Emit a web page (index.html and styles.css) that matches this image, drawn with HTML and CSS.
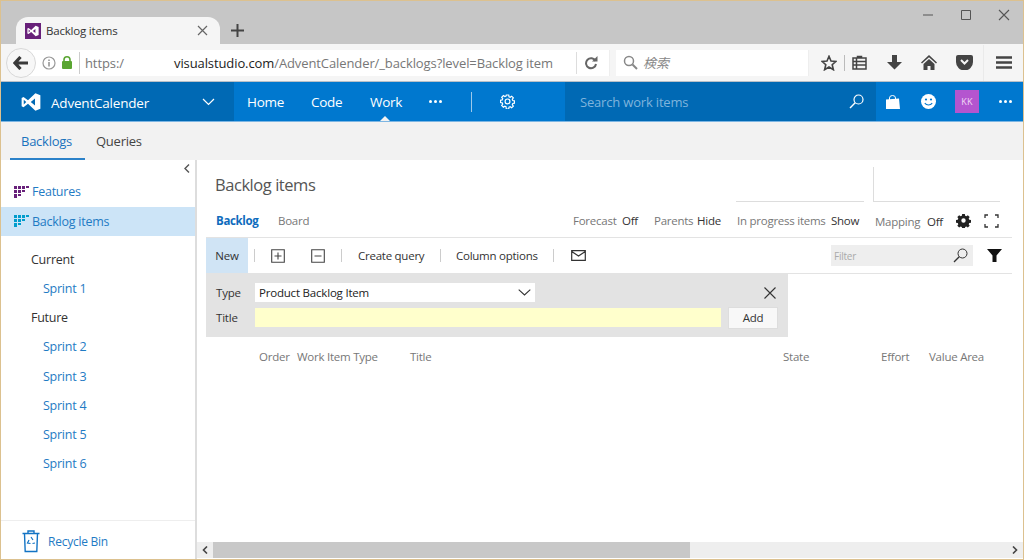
FILE: index.html
```html
<!DOCTYPE html>
<html lang="en">
<head>
<meta charset="utf-8">
<title>Backlog items</title>
<link rel="stylesheet" href="styles.css">
</head>
<body>
<div class="window">
  <div class="tabstrip">
    <div class="tab">
      <span class="favicon"><svg width="12" height="12" viewBox="0 0 16 16"><path fill="#fff" d="M11.5 1 5.6 6.6 2 3.9.5 4.7v6.6l1.5.8 3.6-2.7 5.9 5.6 4-1.6V2.6zM2.2 9.900V6.100L4.200 8zm9 .9L7.800 8l3.400-2.800z"/></svg></span>
      <span class="tab-title">Backlog items</span>
      <svg class="tab-close" width="11" height="11" viewBox="0 0 11 11"><path d="M1 1l9 9M10 1l-9 9" stroke="#666" stroke-width="1.2"/></svg>
    </div>
    <svg class="newtab" width="13" height="13" viewBox="0 0 13 13"><path d="M6.500 0v13M0 6.500h13" stroke="#444" stroke-width="2"/></svg>
    <div class="winctl">
      <svg width="12" height="12" viewBox="0 0 12 12"><path d="M1 6h10" stroke="#555" stroke-width="1"/></svg>
      <svg width="12" height="12" viewBox="0 0 12 12"><path d="M1.500 1.500h9v9h-9z" fill="none" stroke="#555"/></svg>
      <svg width="12" height="12" viewBox="0 0 12 12"><path d="M1 1l10 10M11 1L1 11" stroke="#555" stroke-width="1.1"/></svg>
    </div>
  </div>

  <div class="toolbar">
    <div class="backbtn"><svg width="16" height="14" viewBox="0 0 16 14"><path d="M7.500 1 2 7l5.500 6M2.500 7H15" fill="none" stroke="#3a3a3a" stroke-width="3.200"/></svg></div>
    <div class="urlbar">
      <svg class="ic-info" width="14" height="14" viewBox="0 0 14 14"><circle cx="7" cy="7" r="6" fill="none" stroke="#999" stroke-width="1.200"/><path d="M7 6v4.500M7 3.500v1.400" stroke="#888" stroke-width="1.400"/></svg>
      <svg class="ic-lock" width="12" height="13" viewBox="0 0 12 13"><rect x="1" y="5" width="10" height="8" rx="1" fill="#5aa632"/><path d="M3 6V3.800a3 3 0 0 1 6 0V6" fill="none" stroke="#5aa632" stroke-width="1.600"/></svg>
      <span class="url-div"></span>
      <span class="url-scheme">https:/</span>
      <span class="url-host">visualstudio.com</span><span class="url-path">/AdventCalender/_backlogs?level=Backlog item</span>
      <span class="url-div2"></span>
      <svg class="ic-reload" width="14" height="14" viewBox="0 0 14 14"><path d="M11.500 5A5 5 0 1 0 12 8" fill="none" stroke="#666" stroke-width="2"/><path d="M8 5.500h5.500V0z" fill="#666"/></svg>
    </div>
    <div class="searchbar">
      <svg width="15" height="15" viewBox="0 0 15 15"><circle cx="6" cy="6" r="4.500" fill="none" stroke="#888" stroke-width="1.500"/><path d="M9.500 9.500 14 14" stroke="#888" stroke-width="2"/></svg>
      <span class="search-ph">検索</span>
    </div>
    <div class="tools">
      <svg class="t-star" width="16" height="16" viewBox="0 0 16 16"><path d="M8 1.300 10 6l5 .4-3.800 3.300 1.200 5L8 12l-4.400 2.700 1.200-5L1 6.400 6 6z" fill="none" stroke="#444" stroke-width="1.600"/></svg>
      <span class="t-div"></span>
      <svg class="t-list" width="15" height="15" viewBox="0 0 15 15"><path d="M1 3h13v11H1zM5.500 1.500h4V3h-4zM4.500 3v11M1 6.500h13M1 10h13" fill="none" stroke="#444" stroke-width="1.500"/></svg>
      <svg class="t-down" width="15" height="15" viewBox="0 0 15 15"><path d="M5 0h5v7h5l-7.500 7.500L0 7h5z" fill="#444"/></svg>
      <svg class="t-home" width="16" height="15" viewBox="0 0 16 15"><path d="M8 0 0 7.500l1 1L8 2.300l7 6.200 1-1zM8 4 2.500 9v6h4v-4h3v4h4V9z" fill="#444"/></svg>
      <svg class="t-pocket" width="17" height="15" viewBox="0 0 17 15"><path d="M2 0h13a2 2 0 0 1 2 2v5a8.500 8.500 0 0 1-17 0V2a2 2 0 0 1 2-2z" fill="#444"/><path d="M5 5l3.500 3.500L12 5" fill="none" stroke="#f5f5f5" stroke-width="2"/></svg>
      <span class="t-sep"></span>
      <svg class="t-menu" width="16" height="13" viewBox="0 0 16 13"><path d="M0 1.500h16M0 6.500h16M0 11.500h16" stroke="#444" stroke-width="2.400"/></svg>
    </div>
  </div>

  <nav class="nav">
    <div class="brand">
      <svg width="20" height="20" viewBox="0 0 16 16"><path fill="#fff" d="M11.500 1 5.600 6.600 2 3.900.5 4.700v6.600l1.500.8 3.600-2.700 5.900 5.600 4-1.600V2.600zM2.200 9.900V6.100L4.200 8zm9 .9L7.800 8l3.400-2.800z"/></svg>
      <span class="brand-name">AdventCalender</span>
      <svg class="brand-chev" width="13" height="8" viewBox="0 0 13 8"><path d="M1 1l5.500 5.500L12 1" fill="none" stroke="#fff" stroke-width="1.200"/></svg>
    </div>
    <div class="hubs">
      <span class="hub hub-home">Home</span>
      <span class="hub hub-code">Code</span>
      <span class="hub hub-work">Work</span>
      <span class="dots hub-dots"><i></i><i></i><i></i></span>
      <span class="hub-div"></span>
      <svg class="hub-gear" width="15" height="15" viewBox="0 0 15 15"><path d="M6.300 1h2.400l.3 1.700 1.200.5 1.400-1 1.700 1.700-1 1.400.5 1.200 1.700.3v2.400l-1.700.3-.5 1.200 1 1.400-1.700 1.700-1.400-1-1.200.5-.3 1.700H6.300L6 12.700l-1.200-.5-1.400 1-1.700-1.700 1-1.400-.5-1.200L.5 8.600V6.200l1.700-.3.5-1.200-1-1.400 1.700-1.700 1.400 1L6 2.100z" fill="none" stroke="#fff" stroke-width="1.200"/><circle cx="7.500" cy="7.400" r="2.400" fill="none" stroke="#fff" stroke-width="1.200"/></svg>
    </div>
    <div class="navsearch">
      <span class="navsearch-ph">Search work items</span>
      <svg width="15" height="15" viewBox="0 0 15 15"><circle cx="9.500" cy="5.500" r="4.500" fill="none" stroke="#fff" stroke-width="1.200"/><path d="M6.200 8.800 1 14" stroke="#fff" stroke-width="1.400"/></svg>
    </div>
    <div class="navright">
      <svg class="nr-bag" width="14" height="14" viewBox="0 0 14 14"><path d="M0 4.500 13 3.500 14 14H0z" fill="#fff"/><path d="M3.500 5V3a3 2.500 0 0 1 6 0v2" fill="none" stroke="#fff" stroke-width="1"/></svg>
      <svg class="nr-smile" width="15" height="15" viewBox="0 0 15 15"><circle cx="7.500" cy="7.500" r="7.500" fill="#fff"/><circle cx="5" cy="5.500" r="1.100" fill="#0078cf"/><circle cx="10" cy="5.500" r="1.100" fill="#0078cf"/><path d="M3.800 9.200c1.800 2.400 5.600 2.400 7.400 0" fill="none" stroke="#0078cf" stroke-width="1.100"/></svg>
      <span class="avatar">KK</span>
      <span class="dots nr-dots"><i></i><i></i><i></i></span>
    </div>
  </nav>

  <div class="subnav">
    <span class="subtab subtab-active">Backlogs</span>
    <span class="subtab">Queries</span>
  </div>

  <div class="main">
    <aside class="sidebar">
      <div class="collapse"><svg width="6" height="9" viewBox="0 0 6 9"><path d="M5 .5 1 4.500l4 4" fill="none" stroke="#555" stroke-width="1.400"/></svg></div>
      <div class="side-item">
        <svg width="15" height="12" viewBox="0 0 15 12"><path fill="#68217a" d="M0 0h3v3H0zM4 0h3v3H4zM8 0h3v3H8zM12 0h3v2h-3zM0 4h3v3H0zM4 4h3v3H4zM8 4h3v2H8zM0 8h3v4H0zM4 8h3v2H4z"/></svg>
        <span>Features</span>
      </div>
      <div class="side-item side-selected">
        <svg width="15" height="12" viewBox="0 0 15 12"><path fill="#009ccc" d="M0 0h3v3H0zM4 0h3v3H4zM8 0h3v3H8zM12 0h3v2h-3zM0 4h3v3H0zM4 4h3v3H4zM8 4h3v2H8zM0 8h3v4H0zM4 8h3v2H4z"/></svg>
        <span>Backlog items</span>
      </div>
      <ul class="iterations">
        <li class="iter-head">Current</li>
        <li class="iter-link">Sprint 1</li>
        <li class="iter-head">Future</li>
        <li class="iter-link">Sprint 2</li>
        <li class="iter-link">Sprint 3</li>
        <li class="iter-link">Sprint 4</li>
        <li class="iter-link">Sprint 5</li>
        <li class="iter-link">Sprint 6</li>
      </ul>
      <div class="recycle">
        <svg width="18" height="24" viewBox="0 0 18 24"><path d="M.500 4.500h17M6 4.500V2h6v2.500M2.500 4.500l.7 18h11.600l.7-18" fill="none" stroke="#1273c4" stroke-width="1.400"/><path d="M9 8l2 3M7 11l-1.500 3 3 .5M13 14l-2.500.5" fill="none" stroke="#1273c4" stroke-width="1.200"/></svg>
        <span>Recycle Bin</span>
      </div>
    </aside>

    <section class="content">
      <div class="body">
        <div class="headrow">
          <h1 class="page-title">Backlog items</h1>
          <div class="slot-a"></div>
          <div class="slot-b"></div>
        </div>
        <div class="viewrow">
          <span class="view view-active">Backlog</span>
          <span class="view view-board">Board</span>
          <span class="opt opt-forecast"><span class="opt-k">Forecast</span><span class="opt-v">Off</span></span>
          <span class="opt opt-parents"><span class="opt-k">Parents</span><span class="opt-v">Hide</span></span>
          <span class="opt opt-progress"><span class="opt-k">In progress items</span><span class="opt-v">Show</span></span>
          <span class="opt opt-mapping"><span class="opt-k">Mapping</span><span class="opt-v">Off</span></span>
          <svg class="v-gear" width="15" height="15" viewBox="-1 -1 17 17"><path fill="#222" fill-rule="evenodd" d="M6 0h3l.4 2 1.300.6 1.700-1.100 2.100 2.100-1.100 1.700.6 1.300 2 .4v3l-2 .4-.6 1.300 1.100 1.700-2.100 2.100-1.700-1.100-1.300.6-.4 2H6l-.4-2-1.300-.6-1.700 1.100L.5 13.400l1.100-1.700-.6-1.300-2-.4v-3l2-.4.6-1.300L.5 3.600 2.600 1.500l1.700 1.100 1.300-.6zM7.500 5a2.500 2.500 0 1 0 0 5 2.500 2.500 0 0 0 0-5z"/></svg>
          <svg class="v-full" width="15" height="14" viewBox="0 0 15 14"><path d="M1 4V1h3M11 1h3v3M14 10v3h-3M4 13H1v-3" fill="none" stroke="#333" stroke-width="1.300"/></svg>
        </div>
        <div class="cmdbar">
          <span class="cmd-new">New</span>
          <span class="sep sep-a"></span>
          <svg class="cmd-plus" width="14" height="14" viewBox="0 0 14 14"><path d="M.700.700h12.600v12.600H.700zM7 3.500v7M3.500 7h7" fill="none" stroke="#444" stroke-width="1.100"/></svg>
          <svg class="cmd-minus" width="14" height="14" viewBox="0 0 14 14"><path d="M.700.700h12.600v12.600H.700zM3.500 7h7" fill="none" stroke="#444" stroke-width="1.100"/></svg>
          <span class="sep sep-b"></span>
          <span class="cmd-text cmd-query">Create query</span>
          <span class="sep sep-c"></span>
          <span class="cmd-text cmd-cols">Column options</span>
          <span class="sep sep-d"></span>
          <svg class="cmd-mail" width="15" height="11" viewBox="0 0 15 11"><path d="M.700.700h13.600v9.600H.700zM.700 1.500 7.500 6l6.800-4.500" fill="none" stroke="#333" stroke-width="1.200"/></svg>
          <div class="filter">
            <span>Filter</span>
            <svg width="15" height="15" viewBox="0 0 15 15"><circle cx="9.500" cy="5.500" r="4.500" fill="none" stroke="#333" stroke-width="1"/><path d="M6.200 8.800 1 14" stroke="#333" stroke-width="1.300"/></svg>
          </div>
          <svg class="cmd-funnel" width="15" height="13" viewBox="0 0 15 13"><path d="M0 0h15L9.500 6.500V13h-4V6.500z" fill="#111"/></svg>
        </div>
        <form class="addpanel">
          <div class="add-row">
            <span class="add-label">Type</span>
            <div class="add-select"><span>Product Backlog Item</span><svg width="13" height="7" viewBox="0 0 13 7"><path d="M.700.700l5.800 5.300L12.300.700" fill="none" stroke="#333" stroke-width="1.100"/></svg></div>
            <svg class="add-close" width="12" height="12" viewBox="0 0 12 12"><path d="M.500.500l11 11M11.500.500l-11 11" stroke="#333" stroke-width="1.100"/></svg>
          </div>
          <div class="add-row add-row2">
            <span class="add-label">Title</span>
            <div class="add-input"></div>
            <span class="add-btn">Add</span>
          </div>
        </form>
        <div class="cols">
          <span class="col col-order">Order</span>
          <span class="col col-type">Work Item Type</span>
          <span class="col col-title">Title</span>
          <span class="col col-state">State</span>
          <span class="col col-effort">Effort</span>
          <span class="col col-value">Value Area</span>
        </div>
      </div>
      <div class="hscroll">
        <span class="hs-btn"><svg width="6" height="8" viewBox="0 0 6 8"><path d="M5 .5 1.500 4 5 7.500" fill="none" stroke="#444" stroke-width="1.600"/></svg></span>
        <div class="hs-track"><div class="hs-thumb"></div></div>
        <span class="hs-btn"><svg width="6" height="8" viewBox="0 0 6 8"><path d="M1 .5 4.500 4 1 7.500" fill="none" stroke="#444" stroke-width="1.600"/></svg></span>
      </div>
    </section>
  </div>
</div>
</body>
</html>
```
FILE: styles.css
```css
* { box-sizing: border-box; }
html, body { margin: 0; padding: 0; }
body { font-family: "Open Sans", "Noto Sans CJK JP", sans-serif; font-size: 12px; color: #333; background: #fff; overflow: hidden; }
svg { display: block; flex: none; }

.window { width: 1024px; height: 560px; border: 1px solid #dcc18f; display: flex; flex-direction: column; overflow: hidden; }

.tabstrip { height: 43px; background: #c6c6c6; display: flex; align-items: flex-end; padding-left: 15px; flex: none; }
.tab { width: 204px; height: 27px; background: #f5f5f5; border-radius: 12px 12px 0 0; display: flex; align-items: center; padding-left: 9px; }
.favicon { width: 16px; height: 16px; background: #68217a; display: flex; align-items: center; justify-content: center; }
.tab-title { margin-left: 5px; font-size: 11.500px; letter-spacing: -.2px; color: #333; width: 150px; }
.tab-close { margin-left: 1px; }
.newtab { margin: 0 0 7px 11px; }
.winctl { margin-left: auto; align-self: flex-start; display: flex; gap: 26px; padding: 8px 13px 0 0; }

.toolbar { height: 38px; background: #f5f5f5; border-bottom: 1px solid #b8c0c8; display: flex; align-items: center; padding-left: 5px; flex: none; }
.backbtn { width: 30px; height: 30px; border-radius: 50%; background: #f7f7f7; border: 1px solid #d8d8d8; display: flex; align-items: center; justify-content: center; position: relative; z-index: 1; }
.urlbar { width: 589px; height: 26px; background: #fff; margin-left: -15px; display: flex; align-items: center; padding-left: 21px; font-size: 13px; color: #777; border-right: 1px solid #eee; white-space: nowrap; overflow: hidden; }
.ic-lock { margin-left: 5px; }
.url-div { width: 1px; height: 22px; background: #ccc; margin-left: 6px; }
.url-scheme { margin-left: 5px; width: 89px; letter-spacing: -.1px; }
.url-host { color: #222; letter-spacing: -.1px; flex: none; }
.url-path { width: 280px; overflow: hidden; letter-spacing: -.1px; flex: none; }
.url-div2 { width: 1px; height: 22px; background: #ddd; margin-left: 22px; flex: none; }
.ic-reload { margin-left: 7px; }
.searchbar { width: 193px; height: 26px; background: #fff; margin-left: 6px; border-right: 1px solid #eee; display: flex; align-items: center; padding-left: 7px; }
.search-ph { margin-left: 5px; font-style: italic; color: #888; font-size: 13px; }
.tools { display: flex; align-items: center; height: 100%; }
.t-star { margin-left: 12px; }
.t-div { width: 1px; height: 16px; background: #bbb; margin-left: 7px; }
.t-list { margin-left: 7px; }
.t-down { margin-left: 20px; }
.t-home { margin-left: 19px; }
.t-pocket { margin-left: 19px; }
.t-sep { width: 1px; height: 36px; background: #eaeaea; margin-left: 10px; }
.t-menu { margin-left: 12px; }

.nav { height: 40px; background: #0078cf; border-bottom: 1px solid #7db6e3; display: flex; align-items: stretch; color: #fff; flex: none; }
.brand { width: 233px; background: #0069b4; display: flex; align-items: center; padding-left: 20px; }
.brand-name { margin-left: 10px; font-size: 13.500px; letter-spacing: -.2px; width: 143px; padding-top: 2px; }
.brand-chev { margin-left: 8px; }
.hubs { width: 331px; display: flex; align-items: center; font-size: 13.500px; }
.hub { letter-spacing: -.3px; }
.hub-home { margin-left: 13px; width: 64px; }
.hub-code { width: 59px; }
.hub-work { width: 59px; position: relative; align-self: stretch; display: flex; align-items: center; }
.hub-work::after { content: ""; position: absolute; left: 10px; bottom: 0; border: 5px solid transparent; border-top: 0; border-bottom-color: #f2f2f2; }
.dots { display: flex; gap: 2px; }
.dots i { width: 3px; height: 3px; background: #fff; border-radius: 50%; display: block; }
.hub-div { width: 1px; height: 20px; background: #9cc9ea; margin-left: 29px; }
.hub-gear { margin-left: 28px; }
.navsearch { width: 311px; background: #0069b4; display: flex; align-items: center; justify-content: space-between; padding: 0 12px 0 15px; }
.navsearch-ph { color: #7fb4dc; font-size: 13px; letter-spacing: -.18px; }
.navright { flex: 1; display: flex; align-items: center; }
.nr-bag { margin-left: 10px; }
.nr-smile { margin-left: 21px; }
.avatar { width: 24px; height: 23px; margin-left: 19px; background: #b455cf; color: #f0d8f5; font-size: 9px; display: flex; align-items: center; justify-content: center; letter-spacing: .3px; }
.nr-dots { margin-left: 20px; }

.subnav { height: 38px; background: #f2f2f2; display: flex; flex: none; padding-left: 9px; font-size: 13px; }
.subtab { height: 38px; padding: 10px 11px 0; letter-spacing: -.25px; color: #444; }
.subtab-active { width: 75px; color: #1a73bd; border-bottom: 2px solid #2c82c9; }

.main { flex: 1; display: flex; min-height: 0; }
.sidebar { width: 196px; border-right: 2px solid #ddd; display: flex; flex-direction: column; flex: none; }
.collapse { height: 17px; display: flex; justify-content: flex-end; align-items: center; padding-right: 5px; }
.side-item { height: 29.500px; display: flex; align-items: center; padding-left: 13px; gap: 3px; color: #1f7bc4; font-size: 12.500px; letter-spacing: -.25px; }
.side-selected { background: #cce4f7; }
.iterations { list-style: none; margin: 8.500px 0 0; padding: 0; flex: 1; font-size: 12.500px; letter-spacing: -.25px; }
.iterations li { height: 29.250px; display: flex; align-items: center; }
.iter-head { padding-left: 30px; color: #333; }
.iter-link { padding-left: 42px; color: #1f7bc4; }
.recycle { height: 39px; border-top: 1px solid #eee; display: flex; align-items: center; padding: 2px 0 0 21px; gap: 8px; color: #1f7bc4; font-size: 12px; letter-spacing: -.25px; }

.content { flex: 1; min-width: 0; display: flex; flex-direction: column; }
.body { flex: 1; padding-left: 9px; min-height: 0; }
.headrow { height: 42px; display: flex; }
.page-title { margin: 9px 0 0 9px; font-weight: 400; font-size: 16.500px; letter-spacing: -.45px; color: #555; width: 521px; line-height: 32px; height: 32px; }
.slot-a { width: 128px; border-bottom: 1px solid #ddd; margin-left: -.5px; margin-top: 7px; }
.slot-b { width: 127px; border-left: 1px solid #ddd; border-bottom: 1px solid #ddd; margin-left: 9px; margin-top: 7px; }
.viewrow { height: 35px; padding-top: 2px; display: flex; align-items: center; font-size: 11.500px; letter-spacing: -.25px; white-space: nowrap; }
.view-active { margin-left: 10px; color: #0f6cbd; font-weight: 700; width: 62px; letter-spacing: -.35px; }
.view-board { color: #777; width: 295px; }
.opt { display: flex; }
.opt-k { color: #777; }
.opt-v { color: #333; }
.opt-forecast { width: 81px; }
.opt-forecast .opt-k { width: 49px; }
.opt-parents { width: 83px; }
.opt-parents .opt-k { width: 43px; }
.opt-progress { width: 138px; }
.opt-progress .opt-k { width: 94px; }
.opt-mapping { width: 81px; padding-top: 2px; }
.opt-mapping .opt-k { width: 52px; }
.v-full { margin-left: 13px; }
.cmdbar { height: 37px; width: 806px; border-top: 1px solid #e3e3e3; border-bottom: 1px solid #e3e3e3; display: flex; align-items: center; font-size: 11.500px; letter-spacing: -.25px; color: #333; }
.cmd-new { width: 42px; height: 100%; background: #d0e4f5; display: flex; align-items: center; justify-content: center; }
.sep { width: 1px; height: 13px; background: #ccc; }
.sep-a { margin-left: 6px; }
.cmd-plus { margin-left: 16px; }
.cmd-minus { margin-left: 26px; }
.sep-b { margin-left: 16px; }
.cmd-query { margin-left: 16px; width: 82px; }
.cmd-cols { margin-left: 15px; width: 97px; }
.cmd-mail { margin-left: 17px; }
.filter { width: 142px; height: 21px; margin-left: 245px; background: #eee; display: flex; align-items: center; justify-content: space-between; padding: 0 5px 0 3px; font-size: 10px; color: #aaa; }
.cmd-funnel { margin-left: 14px; }
.addpanel { width: 582px; height: 63px; background: #e3e3e3; padding: 9px 10px 0 11px; margin: 0; }
.add-row { display: flex; align-items: center; height: 19px; font-size: 11.500px; letter-spacing: -.2px; }
.add-row2 { margin-top: 6px; height: 19px; }
.add-label { width: 39px; margin-left: -1px; color: #333; }
.add-select { width: 280px; height: 19px; background: #fff; display: flex; align-items: center; justify-content: space-between; padding: 0 4px; color: #222; }
.add-close { margin-left: 229px; }
.add-input { width: 466px; height: 19px; background: #ffc; }
.add-btn { width: 50px; height: 22px; margin-left: 7px; background: #f8f8f8; border: 1px solid #ddd; display: flex; align-items: center; justify-content: center; flex: none; }
.cols { display: flex; height: 39px; align-items: center; font-size: 11.500px; letter-spacing: -.25px; color: #777; padding-left: 53px; white-space: nowrap; }
.col-order { width: 38px; }
.col-type { width: 113px; }
.col-title { width: 373px; }
.col-state { width: 98px; }
.col-effort { width: 48px; }

.hscroll { height: 16px; background: #eee; display: flex; align-items: center; margin-bottom: 1px; }
.hs-btn { width: 16px; display: flex; justify-content: center; flex: none; }
.hs-track { flex: 1; height: 100%; }
.hs-thumb { width: 477px; height: 100%; background: #c8c8c8; }
```
